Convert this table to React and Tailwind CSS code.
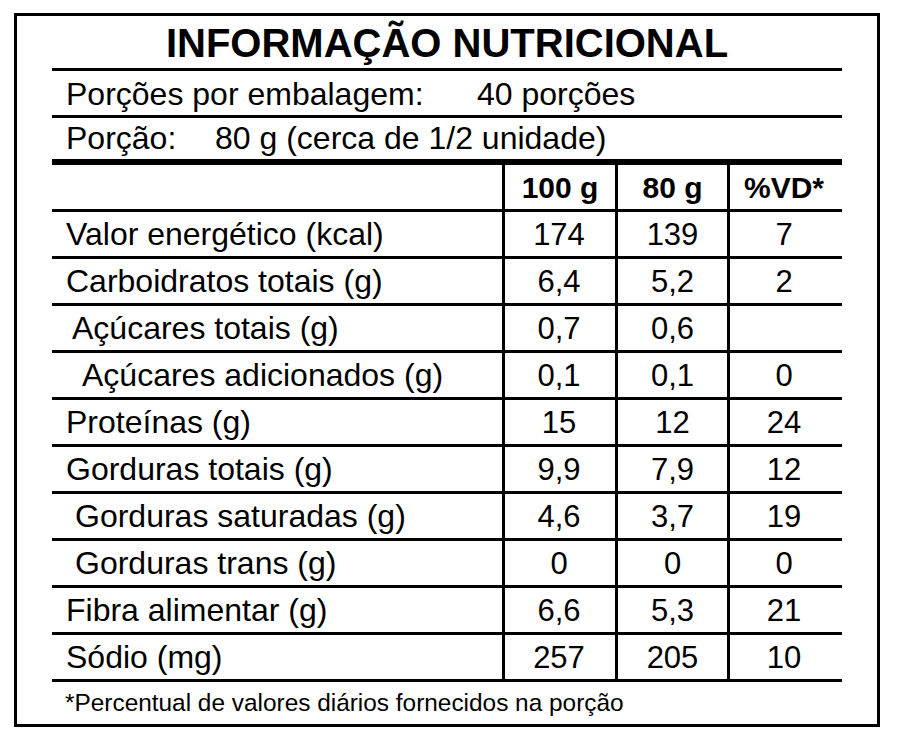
import React from "react";

const rows = [
  { label: "Valor energético (kcal)", pl: "pl-[14px]", a: "174", b: "139", c: "7" },
  { label: "Carboidratos totais (g)", pl: "pl-[14px]", a: "6,4", b: "5,2", c: "2" },
  { label: "Açúcares totais (g)", pl: "pl-[20px]", a: "0,7", b: "0,6", c: "" },
  { label: "Açúcares adicionados (g)", pl: "pl-[30px]", a: "0,1", b: "0,1", c: "0" },
  { label: "Proteínas (g)", pl: "pl-[14px]", a: "15", b: "12", c: "24" },
  { label: "Gorduras totais (g)", pl: "pl-[14px]", a: "9,9", b: "7,9", c: "12" },
  { label: "Gorduras saturadas (g)", pl: "pl-[23px]", a: "4,6", b: "3,7", c: "19" },
  { label: "Gorduras trans (g)", pl: "pl-[23px]", a: "0", b: "0", c: "0" },
  { label: "Fibra alimentar (g)", pl: "pl-[14px]", a: "6,6", b: "5,3", c: "21" },
  { label: "Sódio (mg)", pl: "pl-[14px]", a: "257", b: "205", c: "10" },
];

export default function App() {
  return (
    <div
      className="min-h-screen bg-white pt-[13px] pl-[14px] text-black"
      style={{ fontFamily: '"Liberation Sans", Arial, sans-serif' }}
    >
      <div className="w-[866px] h-[714px] border-[3px] border-black px-[35px] flex flex-col">
        <div className="h-[55px] pt-[4px] text-center text-[40px] font-bold leading-[46px] border-b-[3px] border-black">
          INFORMAÇÃO NUTRICIONAL
        </div>
        <div className="h-[47px] flex items-center pt-[3px] pl-[14px] text-[32px] leading-[37px] border-b-[3px] border-black">
          <span className="w-[411px] shrink-0">Porções por embalagem:</span>
          <span>40 porções</span>
        </div>
        <div className="h-[47px] flex items-center pl-[14px] text-[32px] leading-[37px] border-b-[6px] border-black">
          <span className="w-[149px] shrink-0">Porção:</span>
          <span>80 g (cerca de 1/2 unidade)</span>
        </div>
        <div className="h-[47px] grid grid-cols-[450px_113px_112px_115px] border-b-[3px] border-black text-[30px] font-bold leading-[35px]">
          <div />
          <div className="border-l-[3px] border-black flex items-center justify-center">100 g</div>
          <div className="border-l-[3px] border-black flex items-center justify-center">80 g</div>
          <div className="border-l-[3px] border-black flex items-center justify-center pr-[4px]">%VD*</div>
        </div>
        {rows.map((r) => (
          <div
            key={r.label}
            className="h-[47px] grid grid-cols-[450px_113px_112px_115px] border-b-[3px] border-black leading-[37px]"
          >
            <div className={`flex items-center text-[32px] ${r.pl}`}>{r.label}</div>
            <div className="border-l-[3px] border-black flex items-center justify-center text-[31px] pr-[2px]">{r.a}</div>
            <div className="border-l-[3px] border-black flex items-center justify-center text-[31px]">{r.b}</div>
            <div className="border-l-[3px] border-black flex items-center justify-center text-[31px] pr-[4px]">{r.c}</div>
          </div>
        ))}
        <div className="flex-1 flex items-center pl-[13px] text-[24.4px] leading-[28px]">
          *Percentual de valores diários fornecidos na porção
        </div>
      </div>
    </div>
  );
}
